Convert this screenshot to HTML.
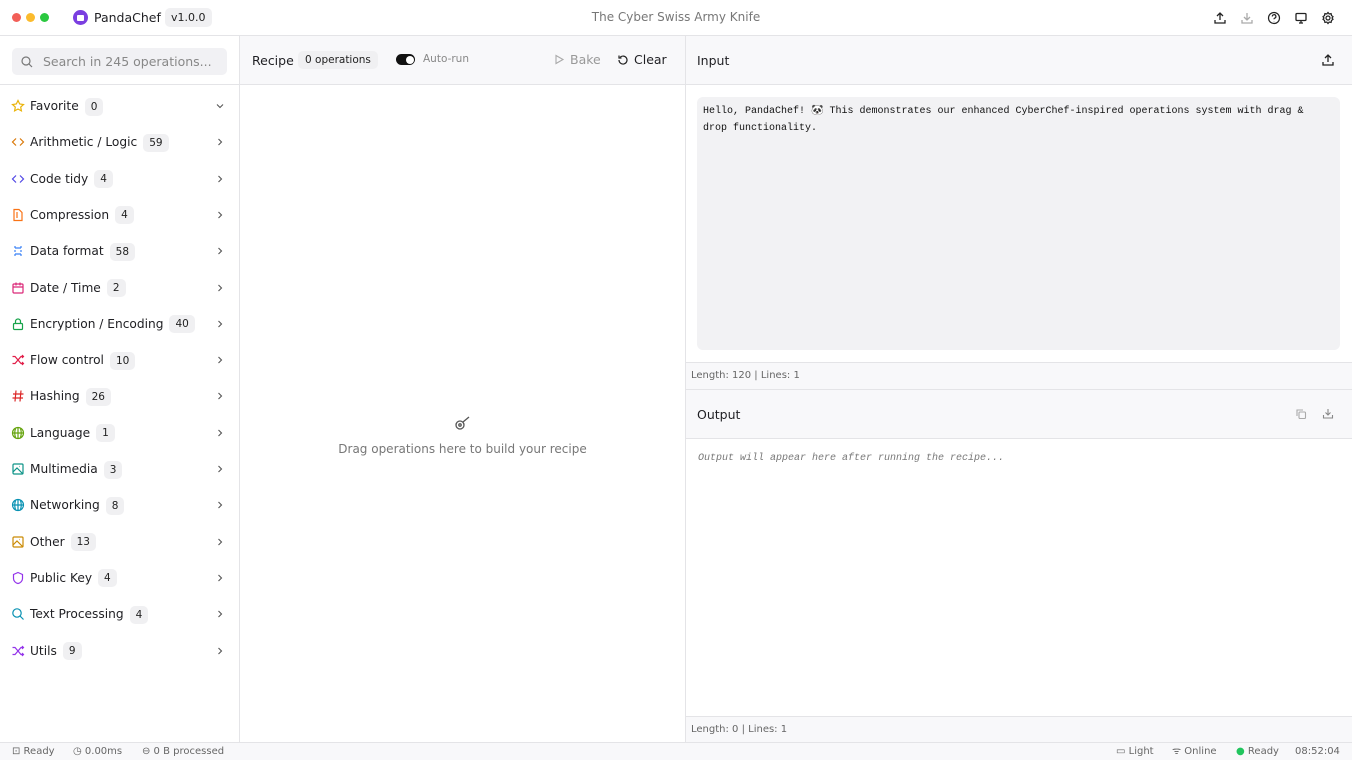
<!DOCTYPE html>
<html><head><meta charset="utf-8"><style>
*{box-sizing:border-box;margin:0;padding:0}
body{width:1352px;height:760px;overflow:hidden;font-family:"DejaVu Sans","Liberation Sans",sans-serif;color:#1f1f23;background:#fff;position:relative;font-size:12px}
.abs{position:absolute}
.hdr{left:0;top:0;width:1352px;height:36px;border-bottom:1px solid #e4e4e7;background:#fff}
.dot{position:absolute;top:13px;width:9px;height:9px;border-radius:50%}
.badge{display:inline-block;background:#f0f0f2;border-radius:5px;font-size:10.5px;padding:0 6px;height:18px;line-height:18px;color:#222;margin-left:6px;vertical-align:middle}
.side{left:0;top:36px;width:240px;height:706px;border-right:1px solid #e4e4e7}
.search{position:absolute;left:12px;top:12px;width:215px;height:27px;background:#f1f1f4;border-radius:5px;color:#888;font-size:12.5px;line-height:27px;padding-left:31px}
.cat{position:absolute;left:0;width:239px;height:30px;line-height:30px;font-size:12.2px}
.cat .ic{position:absolute;left:11px;top:8px;width:14px;height:14px}
.cat .lb{position:absolute;left:30px}
.cat .chev{position:absolute;right:14px;top:10px}
.ph{background:#f8f8fa;border-bottom:1px solid #e4e4e7}
.icn{position:absolute}
.mono{font-family:"Liberation Mono",monospace}
</style></head><body>
<div class="abs hdr">
<div class="dot" style="left:12px;background:#f25f58"></div>
<div class="dot" style="left:26px;background:#fbbb2d"></div>
<div class="dot" style="left:40px;background:#2bc840"></div>
<div class="abs" style="left:73px;top:10px;width:15px;height:15px;border-radius:50%;background:#7b3fe0"><div style="position:absolute;left:4px;top:5px;width:7px;height:6px;background:#fff;border-radius:1px"></div></div>
<div class="abs" style="left:94px;top:10px;font-size:12.5px">PandaChef</div>
<div class="abs badge" style="left:165px;top:8px;margin:0;font-size:11px;height:19px;line-height:19px">v1.0.0</div>
<div class="abs" style="left:0;width:1352px;top:10px;text-align:center;color:#777;font-size:12px">The Cyber Swiss Army Knife</div>
<svg class="icn" style="left:1213px;top:11px" width="14" height="14" viewBox="0 0 14 14" fill="none" stroke="#222" stroke-width="1.3"><path d="M2 9v3h10V9M7 9V2M4 5l3-3 3 3"/></svg>
<svg class="icn" style="left:1240px;top:11px" width="14" height="14" viewBox="0 0 14 14" fill="none" stroke="#aaa" stroke-width="1.3"><path d="M2 9v3h10V9M7 2v7M4 6l3 3 3-3"/></svg>
<svg class="icn" style="left:1267px;top:11px" width="14" height="14" viewBox="0 0 14 14" fill="none" stroke="#222" stroke-width="1.2"><circle cx="7" cy="7" r="5.5"/><path d="M5.3 5.5a1.8 1.8 0 1 1 2.3 1.7c-.5.2-.6.5-.6 1M7 10v.3"/></svg>
<svg class="icn" style="left:1294px;top:11px" width="14" height="14" viewBox="0 0 14 14" fill="none" stroke="#222" stroke-width="1.3"><rect x="2" y="2.5" width="10" height="7" rx="1"/><path d="M5 12h4M7 9.5V12"/></svg>
<svg class="icn" style="left:1321px;top:11px" width="14" height="14" viewBox="0 0 14 14" fill="none" stroke="#222" stroke-width="1.2"><circle cx="7" cy="7" r="2"/><path d="M7 1.5l1.2 1.5 1.9-.4.4 1.9 1.5 1.2-1 1.3 1 1.3-1.5 1.2-.4 1.9-1.9-.4L7 12.5l-1.2-1.5-1.9.4-.4-1.9L2 8.3l1-1.3-1-1.3 1.5-1.2.4-1.9 1.9.4z"/></svg>
</div>

<div class="abs side">
<div style="position:absolute;left:0;top:0;width:239px;height:49px;border-bottom:1px solid #e4e4e7"></div>
<div class="search">Search in 245 operations...</div>
<svg class="icn" style="left:21px;top:20px" width="12" height="12" viewBox="0 0 12 12" fill="none" stroke="#777" stroke-width="1.2"><circle cx="5" cy="5" r="4"/><path d="M8 8l3 3"/></svg>
</div>

<div id="cats"></div>

<div class="abs ph" style="left:240px;top:36px;width:445px;height:49px"></div>
<div class="abs" style="left:252px;top:53px;font-size:12.5px">Recipe</div>
<div class="abs badge" style="left:298px;top:51px;margin:0;padding:0 7px">0 operations</div>
<div class="abs" style="left:396px;top:54px;width:19px;height:11px;border-radius:6px;background:#111"><div style="position:absolute;right:1.5px;top:1.5px;width:8px;height:8px;border-radius:50%;background:#fff"></div></div>
<div class="abs" style="left:423px;top:53px;font-size:10.5px;color:#888">Auto-run</div>
<svg class="icn" style="left:554px;top:54px" width="11" height="11" viewBox="0 0 11 11" fill="none" stroke="#aaa" stroke-width="1.1"><path d="M2 1.5l7 4-7 4z"/></svg>
<div class="abs" style="left:570px;top:52px;font-size:12.5px;color:#999">Bake</div>
<svg class="icn" style="left:617px;top:54px" width="12" height="12" viewBox="0 0 12 12" fill="none" stroke="#222" stroke-width="1.2"><path d="M2 6a4 4 0 1 0 1.2-2.8M2 1.5v2.5h2.5"/></svg>
<div class="abs" style="left:634px;top:52px;font-size:12.5px">Clear</div>
<div class="abs" style="left:685px;top:36px;width:1px;height:706px;background:#e4e4e7"></div>
<svg class="icn" style="left:454px;top:416px" width="17" height="14" viewBox="0 0 17 14" fill="none" stroke="#555" stroke-width="1.3"><circle cx="6" cy="9" r="4"/><circle cx="6" cy="9" r="1.2"/><path d="M9 6l6-5"/></svg>
<div class="abs" style="left:240px;width:445px;top:442px;text-align:center;color:#777;font-size:12px">Drag operations here to build your recipe</div>

<div class="abs ph" style="left:686px;top:36px;width:666px;height:49px"></div>
<div class="abs" style="left:697px;top:53px;font-size:12.5px">Input</div>
<svg class="icn" style="left:1321px;top:53px" width="14" height="14" viewBox="0 0 14 14" fill="none" stroke="#222" stroke-width="1.3"><path d="M2 9v3h10V9M7 9V2M4 5l3-3 3 3"/></svg>
<div class="abs mono" style="left:697px;top:97px;width:643px;height:253px;background:#f2f2f4;border-radius:6px;padding:6px 28px 6px 6px;font-size:10px;line-height:17px;color:#111">Hello, PandaChef! 🐼 This demonstrates our enhanced CyberChef-inspired operations system with drag &amp; drop functionality.</div>
<div class="abs" style="left:686px;top:362px;width:666px;height:28px;background:#f8f8fa;border-top:1px solid #e4e4e7;border-bottom:1px solid #e4e4e7;font-size:10px;color:#666;line-height:26px;padding-left:5px">Length: 120 | Lines: 1</div>
<div class="abs ph" style="left:686px;top:390px;width:666px;height:49px"></div>
<div class="abs" style="left:697px;top:407px;font-size:12.5px">Output</div>
<svg class="icn" style="left:1295px;top:408px" width="12" height="12" viewBox="0 0 12 12" fill="none" stroke="#aaa" stroke-width="1.1"><rect x="4" y="4" width="6.5" height="6.5" rx="1"/><path d="M2 8V2h6"/></svg>
<svg class="icn" style="left:1322px;top:407px" width="12" height="13" viewBox="0 0 12 13" fill="none" stroke="#888" stroke-width="1.1"><path d="M1.5 8v3h9V8M6 2v6M3.5 5.5L6 8l2.5-2.5"/></svg>
<div class="abs mono" style="left:698px;top:453px;font-style:italic;font-size:10px;color:#777">Output will appear here after running the recipe...</div>
<div class="abs" style="left:686px;top:716px;width:666px;height:26px;background:#f8f8fa;border-top:1px solid #e4e4e7;font-size:10px;color:#666;line-height:25px;padding-left:5px">Length: 0 | Lines: 1</div>

<div class="abs" style="left:0;top:742px;width:1352px;height:18px;background:#f8f8fa;border-top:1px solid #e4e4e7;font-size:10px;color:#666;line-height:17px">
<span class="abs" style="left:12px">⊡ Ready</span>
<span class="abs" style="left:73px">◷ 0.00ms</span>
<span class="abs" style="left:142px">⊖ 0 B processed</span>
<span class="abs" style="left:1116px">▭ Light</span>
<span class="abs" style="left:1172px">ᯤ Online</span>
<span class="abs" style="left:1236px"><span style="color:#22c55e">●</span> Ready</span>
<span class="abs" style="left:1295px">08:52:04</span>
</div>

<script>
var cats=[["Favorite","0","#eab308","star"],["Arithmetic / Logic","59","#d97706","code"],["Code tidy","4","#4f46e5","code"],["Compression","4","#f97316","file"],["Data format","58","#3b82f6","grid"],["Date / Time","2","#db2777","cal"],["Encryption / Encoding","40","#16a34a","lock"],["Flow control","10","#e11d48","shuf"],["Hashing","26","#dc2626","hash"],["Language","1","#65a30d","globe"],["Multimedia","3","#0d9488","img"],["Networking","8","#0891b2","globe"],["Other","13","#ca8a04","img"],["Public Key","4","#9333ea","shield"],["Text Processing","4","#0891b2","search"],["Utils","9","#9333ea","shuf"]];
var P={star:'<path d="M7 1.5l1.7 3.5 3.8.5-2.8 2.6.7 3.8L7 10l-3.4 1.9.7-3.8L1.5 5.5l3.8-.5z"/>',code:'<path d="M5 3.5L1.5 7 5 10.5M9 3.5L12.5 7 9 10.5"/>',file:'<path d="M3 1.5h5l3 3v8H3z"/><path d="M6 4v6"/>',grid:'<path d="M4 2v2M4 6v2M4 10v2M10 2v2M10 6v2M10 10v2M4 4h6M4 10h6"/>',cal:'<rect x="2" y="3" width="10" height="9" rx="1"/><path d="M2 6h10M5 1.5v3M9 1.5v3"/>',lock:'<rect x="2.5" y="6.5" width="9" height="6" rx="1"/><path d="M4.5 6.5V4.5a2.5 2.5 0 0 1 5 0v2"/>',shuf:'<path d="M1.5 3.5h2.5l6 7h2.5M1.5 10.5h2.5l6-7h2.5M11 2l1.5 1.5L11 5M11 9l1.5 1.5L11 12"/>',hash:'<path d="M5 1.5l-1 11M10 1.5l-1 11M2 5h10.5M1.5 9H12"/>',globe:'<circle cx="7" cy="7" r="5.5"/><path d="M1.5 7h11M7 1.5v11M4.5 2.5c-1 3-1 6 0 9M9.5 2.5c1 3 1 6 0 9"/>',img:'<rect x="2" y="2" width="10" height="10" rx="1"/><path d="M2 10l4-4 6 6M8.5 4.5h.5"/>',shield:'<path d="M7 1.5l4.5 2v4c0 2.5-2 4.5-4.5 5-2.5-.5-4.5-2.5-4.5-5v-4z"/>',search:'<circle cx="6" cy="6" r="4.2"/><path d="M9 9l3.5 3.5"/>'};
var h='';cats.forEach(function(c,i){var y=91+i*36.3;
h+='<div class="cat" style="top:'+y+'px"><svg class="ic" viewBox="0 0 14 14" fill="none" stroke="'+c[2]+'" stroke-width="1.2">'+P[c[3]]+'</svg><span class="lb">'+c[0]+'<span class="badge">'+c[1]+'</span></span><svg class="chev" width="10" height="10" viewBox="0 0 10 10" fill="none" stroke="#555" stroke-width="1.1"><path d="'+(i==0?'M2 3.5l3 3 3-3':'M3.5 2l3 3-3 3')+'"/></svg></div>';});
document.getElementById('cats').innerHTML=h;
</script>
</body></html>
